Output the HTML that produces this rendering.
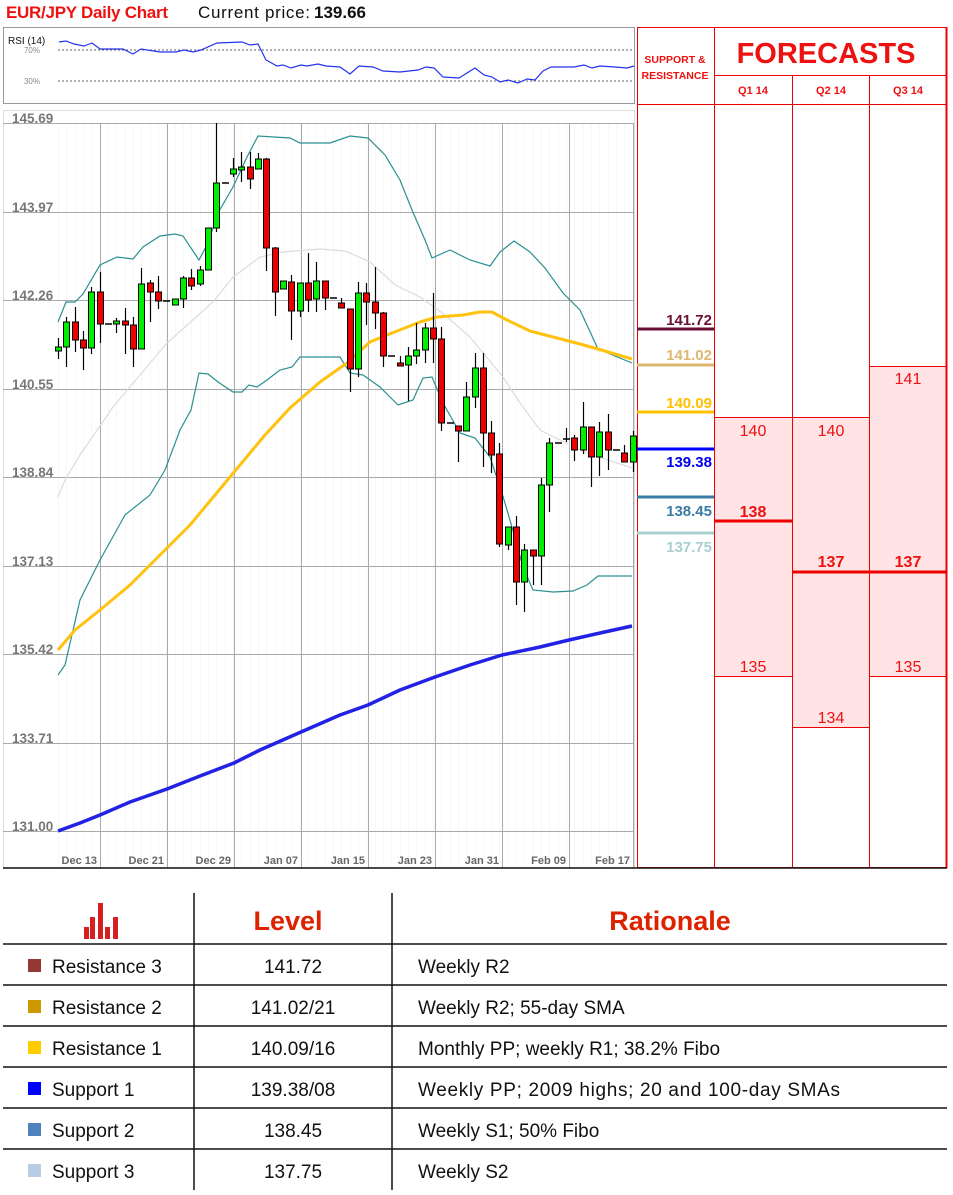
<!DOCTYPE html>
<html><head><meta charset="utf-8">
<style>
html,body{margin:0;padding:0;background:#fff;width:953px;height:1195px;overflow:hidden}
svg{display:block;font-family:"Liberation Sans",Arial,sans-serif}
</style></head>
<body>
<svg id="s" width="953" height="1195" viewBox="0 0 953 1195" xmlns="http://www.w3.org/2000/svg">
<text x="6" y="18" font-size="17" font-weight="bold" fill="#ee1111" textLength="162">EUR/JPY Daily Chart</text>
<text x="198" y="18" font-size="17" fill="#111" textLength="112">Current price:</text>
<text x="314" y="18" font-size="17" font-weight="bold" fill="#111">139.66</text>

<!-- RSI -->
<rect x="3.5" y="27.5" width="631" height="76" fill="#fff" stroke="#999"/>
<text x="8" y="44" font-size="10" fill="#111">RSI (14)</text>
<text x="40" y="53" font-size="8" fill="#888" text-anchor="end">70%</text>
<text x="40" y="84" font-size="8" fill="#888" text-anchor="end">30%</text>
<line x1="58" y1="50" x2="634" y2="50" stroke="#666" stroke-dasharray="2,2"/>
<line x1="58" y1="81" x2="634" y2="81" stroke="#666" stroke-dasharray="2,2"/>
<polyline fill="none" stroke="#2233ee" stroke-width="1.2" points="59,42 66,41 74,44 84,46 92,43 100,49 123,49 133,54 141,49 160,52 176,52 184,50 193,52 201,50 217,43 242,42 250,45 258,44 266,60 277,66 283,65 291,68 301,65 307,66 318,64 326,66 340,67 350,74 359,66 373,67 383,71 400,72 418,70 426,67 434,68 443,77 459,78 467,73 475,68 484,75 492,77 500,82 508,80 518,83 527,79 535,80 543,71 551,67 574,67 584,65 592,68 600,66 615,67 627,68 634,66"/>

<!-- main chart frame -->
<rect x="3.5" y="110.5" width="631" height="757" fill="#fff" stroke="#ddd"/>
<g stroke="#f7f7f7" stroke-width="1" id="minor"></g>
<g stroke="#aaa" stroke-width="1">
<line x1="3" y1="123.5" x2="633" y2="123.5"/><line x1="3" y1="212.5" x2="633" y2="212.5"/><line x1="3" y1="300.5" x2="633" y2="300.5"/><line x1="3" y1="389.5" x2="633" y2="389.5"/><line x1="3" y1="477.5" x2="633" y2="477.5"/><line x1="3" y1="566.5" x2="633" y2="566.5"/><line x1="3" y1="654.5" x2="633" y2="654.5"/><line x1="3" y1="743.5" x2="633" y2="743.5"/><line x1="3" y1="831.5" x2="633" y2="831.5"/>
<line x1="100.5" y1="123" x2="100.5" y2="868"/><line x1="167.5" y1="123" x2="167.5" y2="868"/><line x1="234.5" y1="123" x2="234.5" y2="868"/><line x1="301.5" y1="123" x2="301.5" y2="868"/><line x1="368.5" y1="123" x2="368.5" y2="868"/><line x1="435.5" y1="123" x2="435.5" y2="868"/><line x1="502.5" y1="123" x2="502.5" y2="868"/><line x1="569.5" y1="123" x2="569.5" y2="868"/><line x1="633.5" y1="123" x2="633.5" y2="868"/>
</g>
<g font-size="13.5" fill="#777" font-weight="bold">
<text x="12" y="123">145.69</text><text x="12" y="212">143.97</text><text x="12" y="300">142.26</text><text x="12" y="389">140.55</text><text x="12" y="477">138.84</text><text x="12" y="566">137.13</text><text x="12" y="654">135.42</text><text x="12" y="743">133.71</text><text x="12" y="831">131.00</text>
</g>
<g font-size="11" fill="#666" font-weight="bold" text-anchor="end">
<text x="97" y="864">Dec 13</text><text x="164" y="864">Dec 21</text><text x="231" y="864">Dec 29</text><text x="298" y="864">Jan 07</text><text x="365" y="864">Jan 15</text><text x="432" y="864">Jan 23</text><text x="499" y="864">Jan 31</text><text x="566" y="864">Feb 09</text><text x="630" y="864">Feb 17</text>
</g>

<!-- indicators -->
<polyline fill="none" stroke="#dcdcdc" stroke-width="1.2" points="58,497 65,480 80,455 113,407 167,343 213,302 233,277 260,257 283,252 320,249 345,251 370,262 395,285 420,297 445,315 470,337 503,377 520,403 540,430 560,440 587,453 632,468"/>
<polyline fill="none" stroke="#2a9090" stroke-width="1.2" points="58,322 66,302 75,302 83,294 100,265 117,257 133,259 143,247 160,236 175,234 183,236 199,260 208,243 218,213 233,187 247,157 258,136 290,138 300,143 330,143 350,136 368,138 385,155 400,180 412,210 425,240 432,258 450,250 470,260 490,266 500,252 514,241 530,252 545,268 563,293 580,310 598,349 632,363"/>
<polyline fill="none" stroke="#2a9090" stroke-width="1.2" points="58,675 65,665 80,600 100,560 125,515 150,495 165,470 180,430 191,410 199,373 208,374 218,382 233,392 242,392 249,385 257,387 267,380 280,370 292,367 300,357 320,357 340,357 350,373 363,375 380,387 398,405 413,400 423,378 432,377 443,403 460,433 475,438 490,457 502,493 512,527 523,567 533,590 553,592 573,591 587,585 598,576 632,576"/>
<polyline fill="none" stroke="#ffc20e" stroke-width="3" stroke-linejoin="round" points="58,650 75,630 100,610 130,585 160,555 190,525 215,495 240,465 265,435 290,408 305,395 320,382 347,363 370,342 387,335 420,322 437,317 463,315 480,312 492,312 507,320 530,331 553,337 580,344 598,349 632,359"/>
<polyline fill="none" stroke="#2222e6" stroke-width="3.5" stroke-linejoin="round" points="58,831 80,823 100,815 130,802 167,789 200,776 234,763 260,750 301,732 340,715 368,705 400,690 435,677 470,665 502,655 540,647 569,640 600,633 632,626"/>
<g id="candles"></g>

<!-- forecast panel -->
<g fill="#ffe3e5">
<rect x="714" y="417" width="78" height="259"/><rect x="792" y="417" width="77" height="310"/><rect x="869" y="366" width="78" height="310"/>
</g>
<g stroke="#ee0000" stroke-width="1" fill="none">
<rect x="637.5" y="27.5" width="309" height="840"/>
<line x1="714.5" y1="27" x2="714.5" y2="868"/>
<line x1="792.5" y1="75" x2="792.5" y2="868"/>
<line x1="869.5" y1="75" x2="869.5" y2="868"/>
<line x1="714" y1="75.5" x2="947" y2="75.5"/>
<line x1="637" y1="104.5" x2="947" y2="104.5"/>
<line x1="714" y1="417.5" x2="869" y2="417.5"/>
<line x1="869" y1="366.5" x2="947" y2="366.5"/>
<line x1="714" y1="676.5" x2="792" y2="676.5"/>
<line x1="869" y1="676.5" x2="947" y2="676.5"/>
<line x1="792" y1="727.5" x2="869" y2="727.5"/>
<line x1="946.5" y1="27" x2="946.5" y2="868" stroke-width="2"/>
</g>
<line x1="714" y1="521" x2="792" y2="521" stroke="#ee0000" stroke-width="3"/>
<line x1="792" y1="572" x2="947" y2="572" stroke="#ee0000" stroke-width="3"/>
<g fill="#ee1111" font-weight="bold" text-anchor="middle">
<text x="675" y="63" font-size="10.5">SUPPORT &amp;</text>
<text x="675" y="79" font-size="10.5">RESISTANCE</text>
<text x="826" y="63" font-size="29">FORECASTS</text>
<text x="753" y="94" font-size="11">Q1 14</text><text x="831" y="94" font-size="11">Q2 14</text><text x="908" y="94" font-size="11">Q3 14</text>
</g>
<g fill="#ee1111" font-size="16" text-anchor="middle">
<text x="753" y="436">140</text><text x="831" y="436">140</text><text x="908" y="384">141</text>
<text x="753" y="672">135</text><text x="908" y="672">135</text><text x="831" y="723">134</text>
<text x="753" y="517" font-weight="bold">138</text><text x="831" y="567" font-weight="bold">137</text><text x="908" y="567" font-weight="bold">137</text>
</g>
<g stroke-width="3">
<line x1="637" y1="329" x2="714" y2="329" stroke="#6a0f35"/>
<line x1="637" y1="365" x2="714" y2="365" stroke="#dcb870"/>
<line x1="637" y1="412" x2="714" y2="412" stroke="#ffc000"/>
<line x1="637" y1="449" x2="714" y2="449" stroke="#0000ff"/>
<line x1="637" y1="497" x2="714" y2="497" stroke="#3a7ca5"/>
<line x1="637" y1="533" x2="714" y2="533" stroke="#a8d0d0"/>
</g>
<g font-size="15" font-weight="bold" text-anchor="end">
<text x="712" y="325" fill="#6a0f35">141.72</text>
<text x="712" y="360" fill="#dcb870">141.02</text>
<text x="712" y="408" fill="#ffc000">140.09</text>
<text x="712" y="467" fill="#0000ee">139.38</text>
<text x="712" y="516" fill="#3a7ca5">138.45</text>
<text x="712" y="552" fill="#a8d0d0">137.75</text>
</g>
<line x1="3" y1="868" x2="947" y2="868" stroke="#111" stroke-width="1.5"/>

<!-- table -->
<g fill="#d42020">
<rect x="84" y="927" width="5" height="12"/><rect x="90" y="917" width="5" height="22"/><rect x="98" y="903" width="5" height="36"/><rect x="105" y="927" width="5" height="12"/><rect x="113" y="917" width="5" height="22"/>
</g>
<text x="288" y="930" font-size="27" font-weight="bold" fill="#dd2200" text-anchor="middle">Level</text>
<text x="670" y="930" font-size="27" font-weight="bold" fill="#dd2200" text-anchor="middle">Rationale</text>
<g stroke="#111" stroke-width="1.5">
<line x1="194" y1="893" x2="194" y2="1190"/><line x1="392" y1="893" x2="392" y2="1190"/>
<line x1="3" y1="944" x2="947" y2="944"/><line x1="3" y1="985" x2="947" y2="985"/><line x1="3" y1="1026" x2="947" y2="1026"/><line x1="3" y1="1067" x2="947" y2="1067"/><line x1="3" y1="1108" x2="947" y2="1108"/><line x1="3" y1="1149" x2="947" y2="1149"/>
</g>
<rect x="28" y="959" width="13" height="13" fill="#953735"/>
<rect x="28" y="1000" width="13" height="13" fill="#cc9900"/>
<rect x="28" y="1041" width="13" height="13" fill="#ffcc00"/>
<rect x="28" y="1082" width="13" height="13" fill="#0000ff"/>
<rect x="28" y="1123" width="13" height="13" fill="#4f81bd"/>
<rect x="28" y="1164" width="13" height="13" fill="#b8cce4"/>
<g font-size="19" fill="#111">
<text x="52" y="973">Resistance 3</text><text x="52" y="1014">Resistance 2</text><text x="52" y="1055">Resistance 1</text><text x="52" y="1096">Support 1</text><text x="52" y="1137">Support 2</text><text x="52" y="1178">Support 3</text>
</g>
<g font-size="19" fill="#111" text-anchor="middle">
<text x="293" y="973">141.72</text><text x="293" y="1014">141.02/21</text><text x="293" y="1055">140.09/16</text><text x="293" y="1096">139.38/08</text><text x="293" y="1137">138.45</text><text x="293" y="1178">137.75</text>
</g>
<g font-size="19" fill="#111">
<text x="418" y="973">Weekly R2</text><text x="418" y="1014">Weekly R2; 55-day SMA</text><text x="418" y="1055">Monthly PP;  weekly R1; 38.2% Fibo</text><text x="418" y="1096" textLength="422">Weekly PP; 2009 highs; 20 and 100-day SMAs</text><text x="418" y="1137">Weekly S1; 50% Fibo</text><text x="418" y="1178">Weekly S2</text>
</g>
</svg>
<script>
var d=[[338,359,347,351,'g'],[317,367,322,347,'g'],[307,352,322,340,'r'],[331,370,340,348,'r'],[287,354,292,348,'g'],[272,343,292,324,'r'],[324,324,324,324,'d'],[318,333,321,324,'g'],[308,354,321,325,'r'],[317,367,325,349,'r'],[268,349,284,349,'g'],[280,322,283,292,'r'],[276,309,292,301,'r'],[301,301,301,301,'d'],[299,305,299,305,'g'],[276,308,278,299,'g'],[269,290,278,286,'r'],[266,286,270,284,'g'],[228,270,228,270,'g'],[123,232,183,228,'g'],[183,183,183,183,'d'],[158,177,169,174,'g'],[152,182,167,169,'g'],[152,189,167,179,'r'],[153,169,159,169,'g'],[158,271,159,248,'r'],[247,316,248,292,'r'],[281,289,281,289,'g'],[275,340,282,311,'r'],[283,317,283,311,'g'],[253,312,283,300,'r'],[262,312,281,299,'g'],[281,310,281,298,'r'],[298,298,298,298,'d'],[298,308,303,308,'r'],[309,392,309,369,'r'],[282,377,293,369,'g'],[283,325,293,302,'r'],[267,329,302,313,'r'],[312,367,313,356,'r'],[356,356,356,356,'d'],[356,365,363,365,'r'],[347,401,356,365,'g'],[323,364,350,356,'g'],[323,363,328,350,'g'],[293,363,328,339,'r'],[327,431,339,423,'r'],[423,423,423,423,'d'],[426,462,426,431,'r'],[382,431,397,431,'g'],[353,408,368,397,'g'],[353,467,368,433,'r'],[421,473,433,455,'r'],[443,547,454,544,'r'],[527,550,527,545,'g'],[516,605,527,582,'r'],[544,612,550,582,'g'],[550,585,550,556,'r'],[478,585,485,556,'g'],[438,512,443,485,'g'],[443,443,443,443,'d'],[428,442,439,439,'d'],[435,461,438,450,'r'],[402,454,427,450,'g'],[427,487,427,457,'r'],[422,476,432,457,'g'],[414,470,432,450,'r'],[450,450,450,450,'d'],[445,462,453,462,'r'],[431,472,436,462,'g']];
var h='',m='';
for(var i=0;i<d.length;i++){var x=Math.round(58+i*8.33),c=d[i];
h+='<line x1="'+(x+.5)+'" y1="'+c[0]+'" x2="'+(x+.5)+'" y2="'+c[1]+'" stroke="#000" stroke-width="1.2"/>';
if(c[4]=='d'){h+='<line x1="'+(x-3)+'" y1="'+c[2]+'" x2="'+(x+4)+'" y2="'+c[2]+'" stroke="#000" stroke-width="1.5"/>';}
else{var hh=Math.max(c[3]-c[2],3);h+='<rect x="'+(x-2.5)+'" y="'+c[2]+'" width="6" height="'+hh+'" fill="'+(c[4]=='g'?'#00ee00':'#ee0000')+'" stroke="#000" stroke-width="1"/>';}
m+='<line x1="'+(x+.5)+'" y1="123" x2="'+(x+.5)+'" y2="868"/>';}
document.getElementById('candles').innerHTML=h;
document.getElementById('minor').innerHTML=m;
</script>
</body></html>
